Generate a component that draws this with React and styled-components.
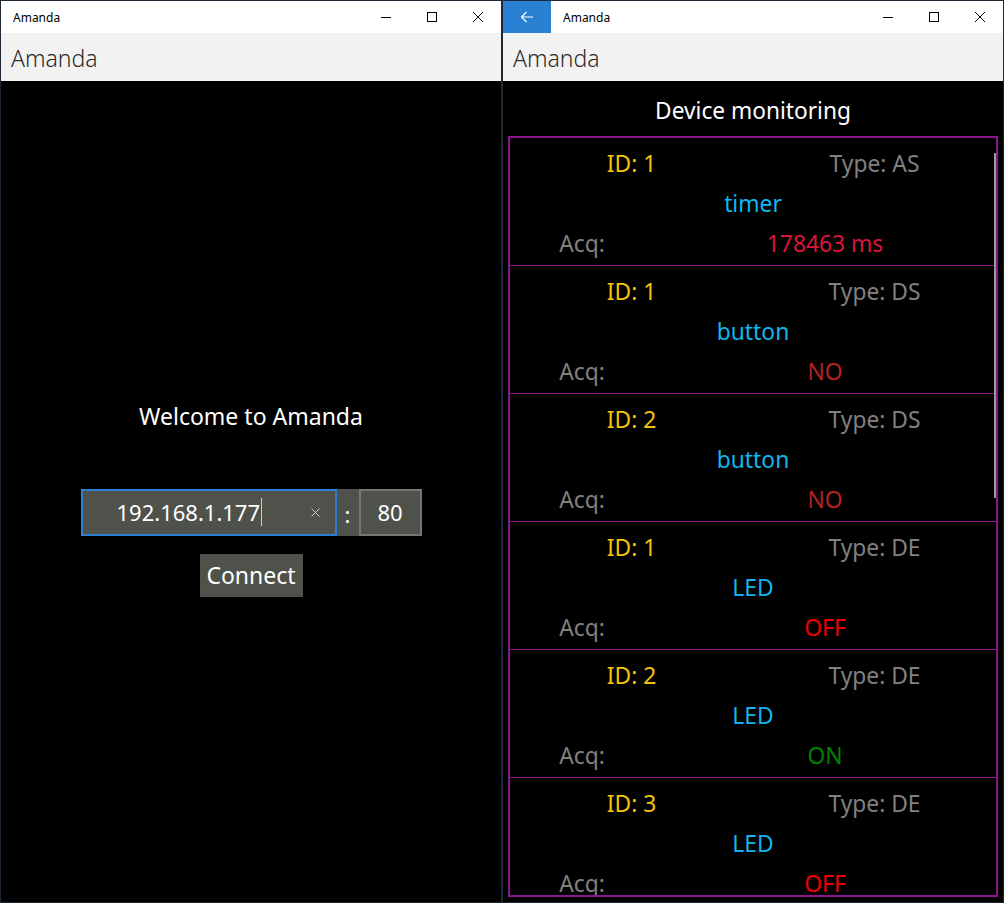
import React from 'react'
import styled, { createGlobalStyle } from 'styled-components'

const GlobalStyle = createGlobalStyle`
  html, body {
    margin: 0;
    padding: 0;
    background: #1d2835;
  }
  body {
    font-family: "Noto Sans", "Open Sans", sans-serif;
  }
`;

const Desktop = styled.div`
  display: flex;
  gap: 2px;
  padding: 1px;
  width: 1004px;
  height: 903px;
  box-sizing: border-box;
`;

const Window = styled.div`
  width: 500px;
  display: flex;
  flex-direction: column;
  background: #000;
`;

const TitleBar = styled.div`
  height: 32px;
  background: #fff;
  display: flex;
  align-items: center;
  flex-shrink: 0;
`;

const BackButton = styled.div`
  width: 48px;
  height: 32px;
  background: #2a80d2;
  display: flex;
  align-items: center;
  justify-content: center;
`;

const WindowTitle = styled.span`
  font-size: 12px;
  color: #000;
  padding-left: 12px;
`;

const Captions = styled.div`
  margin-left: auto;
  display: flex;
`;

const CaptionButton = styled.div`
  width: 46px;
  height: 32px;
  display: flex;
  align-items: center;
  justify-content: center;
`;

const Header = styled.div`
  height: 48px;
  background: #f2f2f2;
  color: #2b2b2b;
  font-size: 23px;
  font-weight: 300;
  display: flex;
  align-items: center;
  padding-left: 10px;
  padding-top: 1px;
  box-sizing: border-box;
  flex-shrink: 0;
`;

/* ---------- login page ---------- */

const LoginContent = styled.div`
  flex: 1;
  display: flex;
  flex-direction: column;
  align-items: center;
  justify-content: center;
  padding-top: 14px;
  color: #fff;
`;

const Welcome = styled.div`
  font-size: 23px;
  line-height: 30px;
`;

const InputRow = styled.div`
  display: flex;
  height: 47px;
  margin-top: 58px;
`;

const Field = styled.div`
  box-sizing: border-box;
  width: ${p => p.$width}px;
  border: 2px solid ${p => p.$border || '#4f524b'};
  background: #4f524b;
  display: flex;
  align-items: center;
  justify-content: ${p => p.$center ? 'center' : 'flex-start'};
  font-size: 22px;
  color: #fff;
`;

const FieldText = styled.span`
  padding-left: 34px;
`;

const Caret = styled.span`
  width: 1px;
  height: 28px;
  background: #ccc;
  margin-left: 1px;
`;

const ClearButton = styled.span`
  margin-left: auto;
  margin-right: 15px;
  display: flex;
`;

const Colon = styled.div`
  width: 22px;
  background: #4f524b;
  display: flex;
  align-items: center;
  justify-content: center;
  font-size: 22px;
  padding-top: 3px;
`;

const ConnectButton = styled.div`
  margin-top: 18px;
  width: 103px;
  height: 43px;
  background: #4f524b;
  display: flex;
  align-items: center;
  justify-content: center;
  font-size: 23px;
`;

/* ---------- monitoring page ---------- */

const MonitorContent = styled.div`
  flex: 1;
  display: flex;
  flex-direction: column;
  min-height: 0;
`;

const Heading = styled.div`
  padding-top: 5px;
  line-height: 50px;
  text-align: center;
  color: #fff;
  font-size: 22.7px;
`;

const DeviceList = styled.div`
  flex: 1;
  margin: 0 5px 5px;
  border: 2px solid #8b168b;
  overflow: hidden;
  position: relative;
`;

const ScrollThumb = styled.div`
  position: absolute;
  right: 0;
  top: 15px;
  width: 2px;
  height: 345px;
  background: #999;
`;

const DeviceItem = styled.div`
  box-sizing: border-box;
  height: 128px;
  padding-top: 5px;
  border-bottom: 1px solid #8b168b;
  font-size: 22.8px;
`;

const Row = styled.div`
  display: grid;
  grid-template-columns: ${p => p.$cols || '1fr'};
  height: 40px;
  align-items: center;
  text-align: center;
`;

const Cell = styled.span`
  color: ${p => p.$color};
`;

const devices = [
  { id: 1, type: 'AS', name: 'timer', acq: '178463 ms', color: '#dc143c' },
  { id: 1, type: 'DS', name: 'button', acq: 'NO', color: '#b22222' },
  { id: 2, type: 'DS', name: 'button', acq: 'NO', color: '#b22222' },
  { id: 1, type: 'DE', name: 'LED', acq: 'OFF', color: '#ee0000' },
  { id: 2, type: 'DE', name: 'LED', acq: 'ON', color: '#008000' },
  { id: 3, type: 'DE', name: 'LED', acq: 'OFF', color: '#ee0000' },
]

function CaptionButtons() {
  return (
    <Captions>
      <CaptionButton>
        <svg width="10" height="10" viewBox="0 0 10 10">
          <line x1="0" y1="5.5" x2="10" y2="5.5" stroke="#000" strokeWidth="1" />
        </svg>
      </CaptionButton>
      <CaptionButton>
        <svg width="10" height="10" viewBox="0 0 10 10">
          <rect x="0.5" y="0.5" width="9" height="9" fill="none" stroke="#000" strokeWidth="1" />
        </svg>
      </CaptionButton>
      <CaptionButton>
        <svg width="10" height="10" viewBox="0 0 10 10">
          <path d="M0 0 L10 10 M10 0 L0 10" stroke="#000" strokeWidth="1" />
        </svg>
      </CaptionButton>
    </Captions>
  )
}

function App() {
  return (
    <>
      <GlobalStyle />
      <Desktop>
        <Window>
          <TitleBar>
            <WindowTitle>Amanda</WindowTitle>
            <CaptionButtons />
          </TitleBar>
          <Header>Amanda</Header>
          <LoginContent>
            <Welcome>Welcome to Amanda</Welcome>
            <InputRow>
              <Field $width={256} $border="#2a80d2">
                <FieldText>192.168.1.177</FieldText>
                <Caret />
                <ClearButton>
                  <svg width="9" height="9" viewBox="0 0 9 9">
                    <path d="M0.5 0.5 L8.5 8.5 M8.5 0.5 L0.5 8.5" stroke="#c8c8c8" strokeWidth="1" />
                  </svg>
                </ClearButton>
              </Field>
              <Colon>:</Colon>
              <Field $width={63} $border="#767676" $center>80</Field>
            </InputRow>
            <ConnectButton>Connect</ConnectButton>
          </LoginContent>
        </Window>

        <Window>
          <TitleBar>
            <BackButton>
              <svg width="14" height="12" viewBox="0 0 14 12">
                <path d="M13 6 H1.5 M6.5 1 L1.5 6 L6.5 11" fill="none" stroke="#fff" strokeWidth="1.2" />
              </svg>
            </BackButton>
            <WindowTitle>Amanda</WindowTitle>
            <CaptionButtons />
          </TitleBar>
          <Header>Amanda</Header>
          <MonitorContent>
            <Heading>Device monitoring</Heading>
            <DeviceList>
              {devices.map((d, i) => (
                <DeviceItem key={i}>
                  <Row $cols="1fr 1fr">
                    <Cell $color="#f2c40c">ID: {d.id}</Cell>
                    <Cell $color="#808080">Type: {d.type}</Cell>
                  </Row>
                  <Row>
                    <Cell $color="#10b6ee">{d.name}</Cell>
                  </Row>
                  <Row $cols="144px 1fr">
                    <Cell $color="#808080">Acq:</Cell>
                    <Cell $color={d.color}>{d.acq}</Cell>
                  </Row>
                </DeviceItem>
              ))}
              <ScrollThumb />
            </DeviceList>
          </MonitorContent>
        </Window>
      </Desktop>
    </>
  )
}

export default App
